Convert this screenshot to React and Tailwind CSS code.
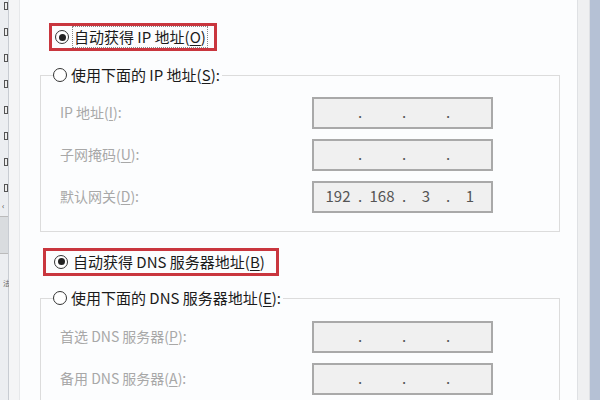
import React from 'react';

const font = { fontFamily: '"Noto Sans CJK SC", "Noto Sans", sans-serif' };

function Radio({ checked }) {
  return (
    <span className="w-[14px] h-[14px] rounded-full border border-[#333] bg-white flex items-center justify-center shrink-0">
      {checked && <span className="w-[7px] h-[7px] rounded-full bg-[#222]" />}
    </span>
  );
}

function IpBox({ value }) {
  const parts = value || ['', '', '', ''];
  return (
    <div className="w-[181px] h-[32px] border-2 border-[#a9a9a9] bg-[#f0f0f0] flex items-center pl-[6px] text-[15px] text-[#555]">
      <span className="w-[36px] text-center">{parts[0]}</span>
      <span className="w-[8px] text-center">.</span>
      <span className="w-[36px] text-center">{parts[1]}</span>
      <span className="w-[8px] text-center">.</span>
      <span className="w-[36px] text-center">{parts[2]}</span>
      <span className="w-[8px] text-center">.</span>
      <span className="w-[36px] text-center">{parts[3]}</span>
    </div>
  );
}

function Row({ label, value, className }) {
  return (
    <div className={`flex items-center justify-between pr-[66px] ${className || ''}`}>
      <span className="text-[14px] text-[#a8a8a8] pl-[19px]">{label}</span>
      <IpBox value={value} />
    </div>
  );
}

function U({ children }) {
  return <span className="underline underline-offset-2">{children}</span>;
}

export default function App() {
  const icons = [5, 30, 53, 80, 107, 133, 155, 183];
  return (
    <div className="w-[600px] h-[400px] overflow-hidden flex bg-[#fcfdfe]" style={font}>
      {/* left strip of another window */}
      <div className="w-[20px] h-full flex shrink-0">
        <div className="w-[9px] bg-[#eceef1] border-r border-[#c8ccd2] flex flex-col">
          <div className="flex flex-col gap-[18px] pt-[2px] pl-[4px]">
            {icons.map((y, i) => (
              <span key={i} className="w-[4px] h-[8px] border border-[#555] bg-[#eee]" />
            ))}
          </div>
          <div className="mt-[10px] text-[8px] leading-none text-[#444] pl-[2px]">‹</div>
          <div className="mt-[6px] h-[38px] bg-[#d9dcdf] border-y border-[#bbb]" />
          <div className="mt-[26px] text-[7px] text-[#666] pl-[3px] leading-none">法</div>
        </div>
        <div className="w-[11px] bg-[#f4f5f6] border-r border-[#e6e8ea]" />
      </div>

      {/* dialog content */}
      <div className="flex-1 flex flex-col text-[15px] text-[#1b1b1b] pt-[23px]">
        <div className="ml-[29px] w-[168px] h-[35px] border-[3px] border-[#c9363e] flex items-center pl-[3px]">
          <Radio checked />
          <span className="ml-[3px] px-[1px] border border-dotted border-[#888] leading-[20px]">
            自动获得 IP 地址(<U>O</U>)
          </span>
        </div>

        <fieldset className="ml-[20px] mr-[17px] mt-[13px] border border-[#dcdcdc] px-0 pb-[18px]">
          <legend className="ml-[12px] flex items-center bg-[#fcfdfe] pr-[2px]">
            <Radio />
            <span className="ml-[4px]">使用下面的 IP 地址(<U>S</U>):</span>
          </legend>
          <Row label={<>IP 地址(<U>I</U>):</>} className="mt-[10px]" />
          <Row label={<>子网掩码(<U>U</U>):</>} className="mt-[10px]" />
          <Row label={<>默认网关(<U>D</U>):</>} value={['192', '168', '3', '1']} className="mt-[10px]" />
        </fieldset>

        <div className="ml-[23px] mt-[16px] w-[236px] h-[30px] border-[3px] border-[#c9363e] flex items-center pl-[8px]">
          <Radio checked />
          <span className="ml-[5px]">自动获得 DNS 服务器地址(<U>B</U>)</span>
        </div>

        <fieldset className="ml-[20px] mr-[17px] mt-[11px] border border-[#dcdcdc] px-0 pb-[13px]">
          <legend className="ml-[12px] flex items-center bg-[#fcfdfe] pr-[2px]">
            <Radio />
            <span className="ml-[4px]">使用下面的 DNS 服务器地址(<U>E</U>):</span>
          </legend>
          <Row label={<>首选 DNS 服务器(<U>P</U>):</>} className="mt-[11px]" />
          <Row label={<>备用 DNS 服务器(<U>A</U>):</>} className="mt-[10px]" />
        </fieldset>
      </div>

      {/* right frame */}
      <div className="w-[13px] h-full bg-[#eff0f1] border-x border-[#dfe1e4] shrink-0" />
      <div className="w-[10px] h-full bg-[#b5c1d5] shrink-0" />
    </div>
  );
}
